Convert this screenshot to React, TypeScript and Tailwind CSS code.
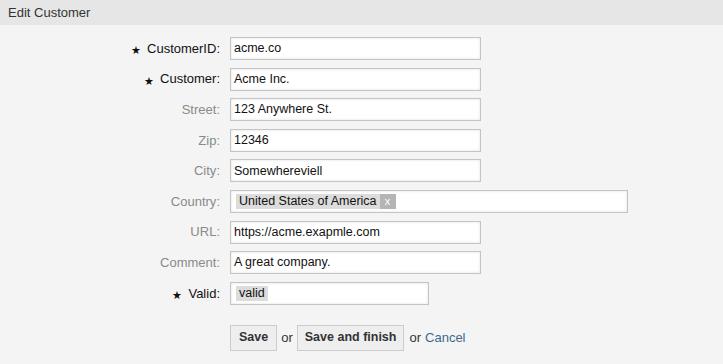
import React from "react";

type Field = {
  label: string;
  value?: string;
  required?: boolean;
  width?: string;
  tag?: string;
  removable?: boolean;
};

const fields: Field[] = [
  { label: "CustomerID", value: "acme.co", required: true },
  { label: "Customer", value: "Acme Inc.", required: true },
  { label: "Street", value: "123 Anywhere St." },
  { label: "Zip", value: "12346" },
  { label: "City", value: "Somewhereviell" },
  { label: "Country", tag: "United States of America", removable: true, width: "w-[398px]" },
  { label: "URL", value: "https://acme.exapmle.com" },
  { label: "Comment", value: "A great company." },
  { label: "Valid", tag: "valid", required: true, width: "w-[199px]" },
];

export default function App() {
  return (
    <div className="w-[723px] h-[364px] bg-[#f4f4f4] font-['Liberation_Sans',Arial,sans-serif] text-[#333] overflow-hidden">
      <div className="h-[25px] bg-[#e6e6e6] flex items-center pl-[8px] text-[13px] text-[#333]">
        Edit Customer
      </div>

      <div className="flex flex-col gap-[7.6px] pt-[12px]">
        {fields.map((f) => (
          <div key={f.label} className="flex items-center">
            <div
              className={`w-[230px] pr-[10px] flex justify-end items-center text-[13px] ${
                f.required ? "text-[#111]" : "text-[#8a8a8a]"
              }`}
            >
              {f.required && <span className="text-[11px] mr-[6px] leading-none mt-[4px]">&#9733;</span>}
              {f.label}:
            </div>
            <div
              className={`${f.width ?? "w-[251px]"} h-[23px] bg-white border border-[#c4c4c4] shadow-[inset_0_0_3px_rgba(0,0,0,0.12)] flex items-center px-[3px] text-[12.5px] text-[#111]`}
            >
              {f.tag ? (
                <span className="flex items-center h-[15px] ml-[2px] bg-[#dcdcdc]">
                  <span className="px-[3px] text-[12.5px]">{f.tag}</span>
                  {f.removable && (
                    <span className="h-full w-[16px] bg-[#b5b5b5] text-white text-[11px] flex items-center justify-center">
                      x
                    </span>
                  )}
                </span>
              ) : (
                f.value
              )}
            </div>
          </div>
        ))}
      </div>

      <div className="flex items-center pl-[230px] mt-[20px] text-[13px] text-[#333]">
        <button className="h-[26px] px-[8px] bg-[#eeeeee] border border-[#cccccc] font-bold text-[12.5px] text-[#333]">
          Save
        </button>
        <span className="mx-[4px]">or</span>
        <button className="h-[26px] px-[7px] bg-[#eeeeee] border border-[#cccccc] font-bold text-[12.5px] text-[#333]">
          Save and finish
        </button>
        <span className="ml-[5px]">or</span>
        <a className="ml-[4px] text-[#3b6a8c]">Cancel</a>
      </div>
    </div>
  );
}
